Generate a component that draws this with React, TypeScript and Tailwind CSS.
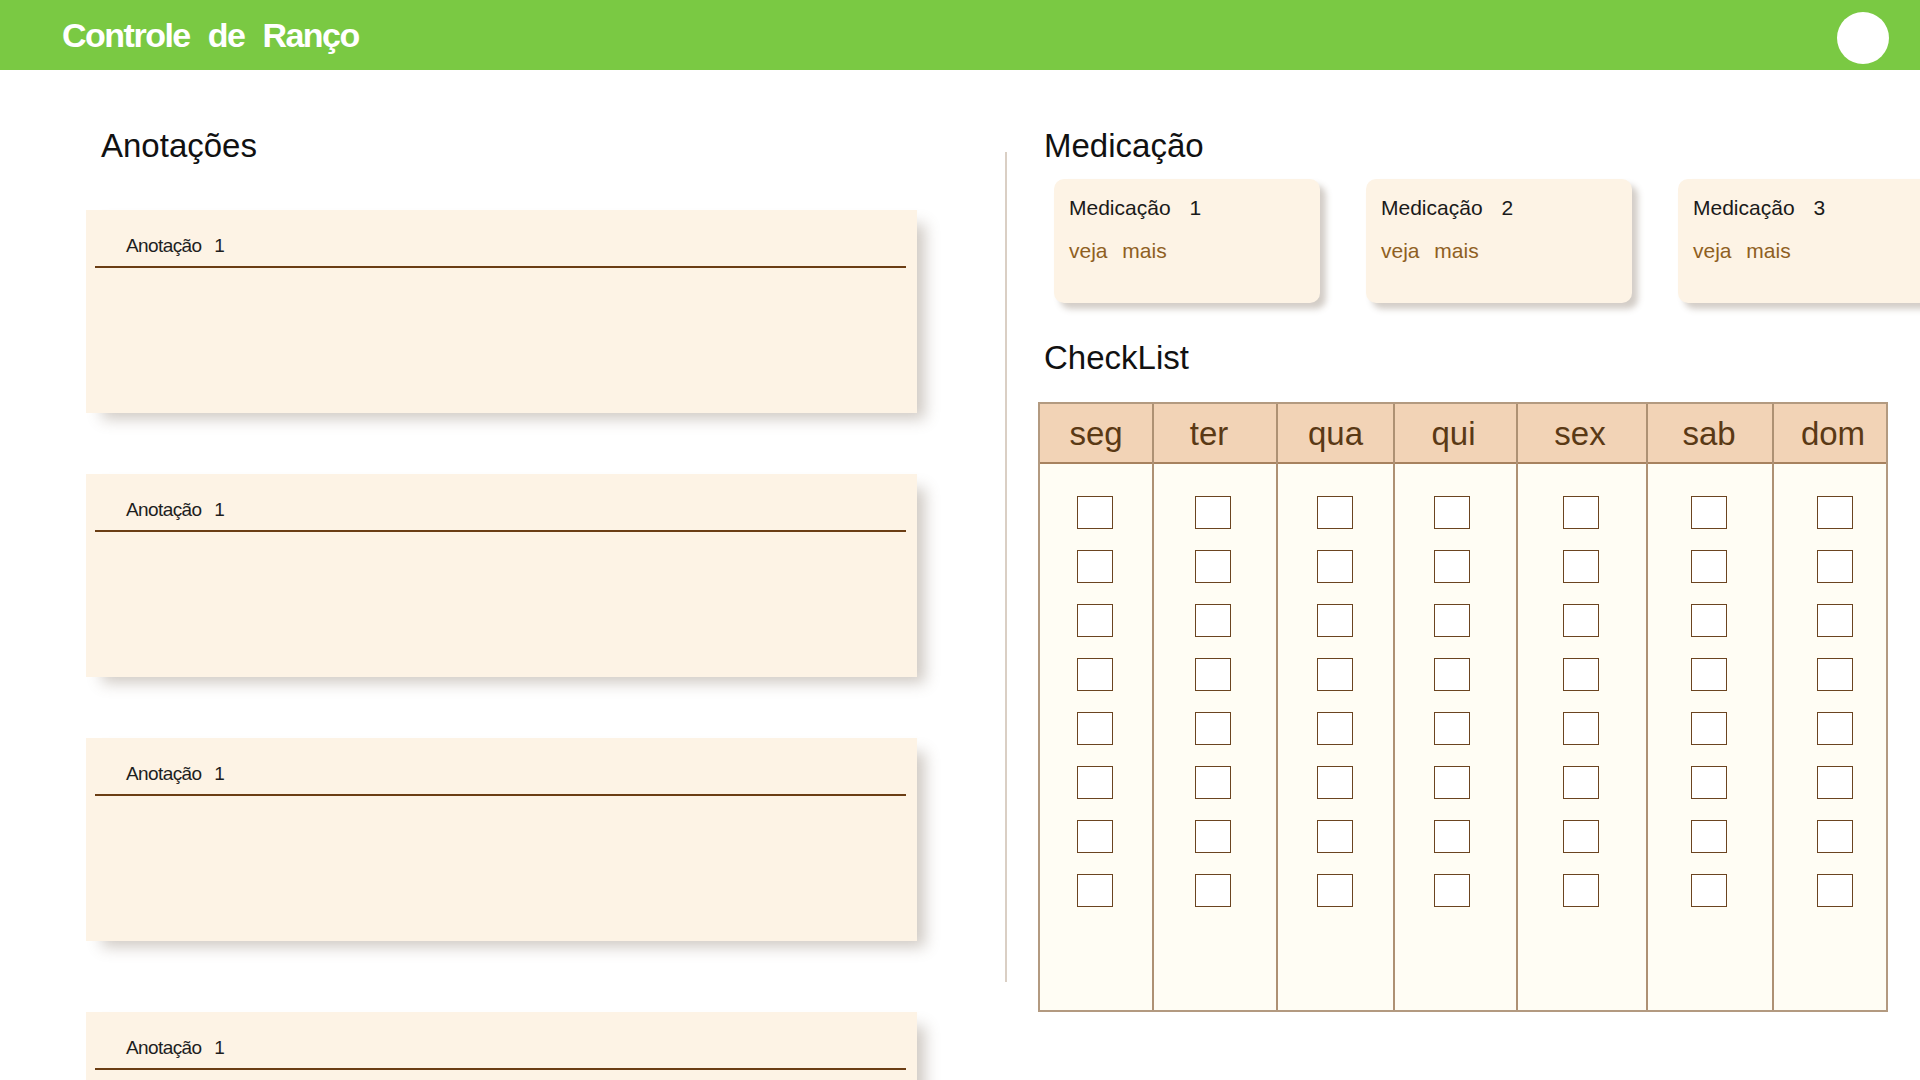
const notes = [
    { id: 1, title: "Anotação 1", mt: "mt-[48px]" },
    { id: 2, title: "Anotação 1", mt: "mt-[61px]" },
    { id: 3, title: "Anotação 1", mt: "mt-[61px]" },
    { id: 4, title: "Anotação 1", mt: "mt-[71px]" },
];

const meds = ["Medicação 1", "Medicação 2", "Medicação 3"];

// column widths measured from the mockup, borders included
// boxes aren't perfectly centred in the original, hence the nudges
const days = [
    { day: "seg", cls: "w-[112px]", head: "", body: "pr-[2px]" },
    { day: "ter", cls: "w-[124px] border-l-2", head: "pr-[12px]", body: "pr-[5px]" },
    { day: "qua", cls: "w-[117px] border-l-2", head: "", body: "pr-[2px]" },
    { day: "qui", cls: "w-[123px] border-l-2", head: "pr-[4px]", body: "pr-[7px]" },
    { day: "sex", cls: "w-[130px] border-l-2", head: "pr-[4px]", body: "pr-[2px]" },
    { day: "sab", cls: "w-[126px] border-l-2", head: "pr-[2px]", body: "pr-[2px]" },
    { day: "dom", cls: "w-[114px] border-l-2", head: "pl-[6px]", body: "pl-[10px]" },
];

const rows = [0, 1, 2, 3, 4, 5, 6, 7];

const Header = () => (
    <header className="h-[70px] bg-[#7ac943] flex items-center justify-between pl-[62px] pr-[31px] shrink-0">
        <h1 className="text-white font-bold text-[34px] leading-none tracking-[-1.5px]">
            <span>Controle</span> <span className="ml-[10px]">de</span> <span className="ml-[10px]">Ranço</span>
        </h1>
        <div className="size-[52px] rounded-full bg-white mt-[6px]" />
    </header>
);

const NoteCard = ({ title, mt }: { title: string; mt: string }) => {
    const [label, num] = title.split(" ");
    return (
        <div className={`${mt} w-[831px] h-[203px] shrink-0 bg-[#fdf3e5] shadow-[12px_10px_14px_-4px_rgba(110,90,70,0.32)] pt-[26px]`}>
            <p className="pl-[40px] text-[19px] leading-none tracking-[-0.6px] text-[#1e1e1e]">
                {label} <span className="ml-[8px]">{num}</span>
            </p>
            <div className="mt-[11px] ml-[9px] mr-[11px] h-[2px] bg-[#6b3d14]" />
        </div>
    );
};

const MedCard = ({ name }: { name: string }) => {
    const [label, num] = name.split(" ");
    return (
        <div className="w-[266px] h-[124px] shrink-0 rounded-[10px] bg-[#fdf3e5] shadow-[6px_6px_6px_rgba(110,90,70,0.3)] pt-[18px] pl-[15px]">
            <p className="text-[21px] leading-none text-[#1a1a1a]">
                {label} <span className="ml-[13px]">{num}</span>
            </p>
            <p className="mt-[22px] text-[21px] leading-none text-[#8f5f22]">
                veja <span className="ml-[9px]">mais</span>
            </p>
        </div>
    );
};

const CheckTable = () => (
    <div className="mt-[28px] w-[850px] h-[610px] flex border-2 border-[#b39a80] bg-[#fffdf4]">
        {days.map((d) => (
            <div key={d.day} className={`${d.cls} border-[#ae9173] flex flex-col`}>
                <div className={`${d.head} h-[60px] bg-[#f2d3b6] border-b-2 border-[#a7825f] flex items-center justify-center text-[33px] leading-none text-[#5a3915]`}>
                    {d.day}
                </div>
                <div className={`${d.body} flex flex-col items-center gap-[21px] pt-[32px]`}>
                    {rows.map((r) => (
                        <div key={r} className="w-[36px] h-[33px] bg-white border-[1.5px] border-[#6b4420]" />
                    ))}
                </div>
            </div>
        ))}
    </div>
);

export default function App() {
    return (
        <div className="w-full h-screen overflow-hidden bg-white flex flex-col" style={{ fontFamily: '"Liberation Sans", Arial, sans-serif' }}>
            <Header />
            <main className="flex">
                <section className="pl-[86px] w-[917px] shrink-0 flex flex-col">
                    <h2 className="mt-[59px] pl-[15px] text-[33px] leading-none text-[#111]">Anotações</h2>
                    {notes.map((n) => (
                        <NoteCard key={n.id} title={n.title} mt={n.mt} />
                    ))}
                </section>

                <div className="ml-[88px] mt-[82px] w-[2px] h-[830px] bg-[#dacfc4] shrink-0" />

                <section className="ml-[31px] flex-1 min-w-0 flex flex-col">
                    <h2 className="mt-[59px] pl-[6px] text-[33px] leading-none text-[#111]">Medicação</h2>
                    <div className="mt-[17px] ml-[16px] flex gap-[46px]">
                        {meds.map((m) => (
                            <MedCard key={m} name={m} />
                        ))}
                    </div>
                    <h2 className="mt-[38px] pl-[6px] text-[33px] leading-none text-[#111]">CheckList</h2>
                    <CheckTable />
                </section>
            </main>
        </div>
    );
}
